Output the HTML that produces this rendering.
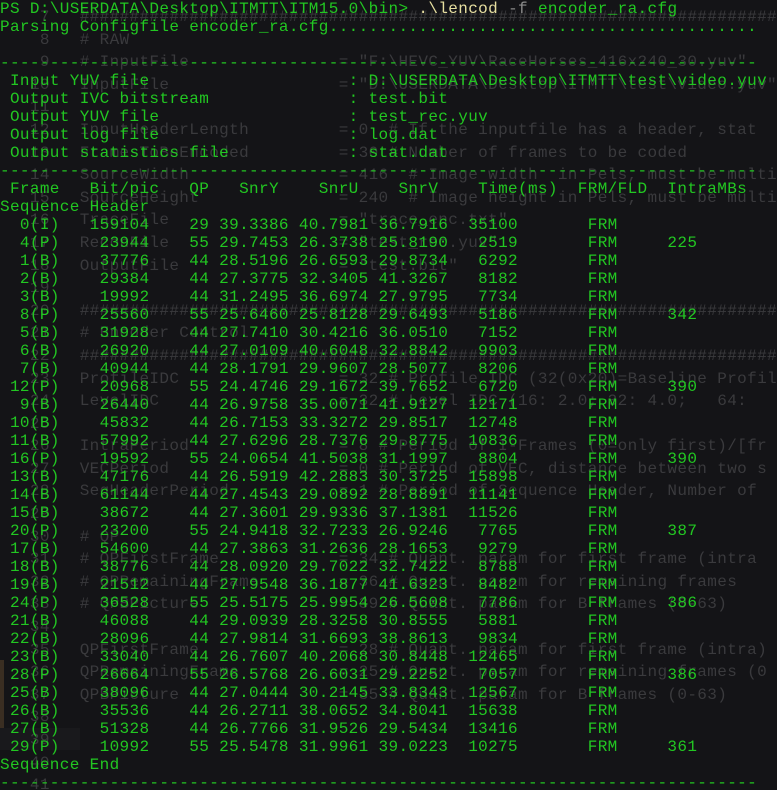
<!DOCTYPE html>
<html><head><meta charset="utf-8">
<style>
html,body{margin:0;padding:0;background:#141417;}
body{width:777px;height:790px;overflow:hidden;position:relative;}
pre{margin:0;font-family:"Liberation Mono",monospace;font-size:16px;letter-spacing:0.36px;white-space:pre;position:absolute;left:0;width:777px;overflow:hidden;}
#ed{top:6px;line-height:22.6px;color:#3a3a3d;font-size:16px;height:784px;}
#tm{top:0;line-height:18px;color:#22c722;height:790px;}
.y{color:#e6dfa0}.g{color:#8a8a8a}
#bar{position:absolute;left:0;top:660px;width:4px;height:70px;background:#3a2e22;}
#blk{position:absolute;left:0;top:728px;width:80px;height:22px;background:#19191c;}
</style></head><body>
<div id="bar"></div><div id="blk"></div>
<pre id="ed">    7   ######################################################################
    8   # RAW
    9   # InputFile               = "F:\HEVC_YUV\RaceHorses_416x240_30.yuv"
   10   InputFile                 = "D:\USERDATA\Desktop\ITMTT\test\video.yuv"
   11
   12   InputHeaderLength         = 0  # If the inputfile has a header, stat
   13   FramesToBeEncoded         = 30 # Number of frames to be coded
   14   SourceWidth               = 416  # Image width  in Pels, must be multi
   15   SourceHeight              = 240  # Image height in Pels, must be multi
   16   TraceFile                 = "trace_enc.txt"
   17   ReconFile                 = "test_rec.yuv"
   18   OutputFile                = "test.bit"
   19
   20   ######################################################################
   21   # Encoder Control
   22   ######################################################################
   23   ProfileIDC                = 32 # Profile IDC (32(0x20)=Baseline Profil
   24   LevelIDC                  = 32 # Level IDC (16: 2.0; 32: 4.0;   64:
   25
   26   IntraPeriod               = 8 # Period of I-Frames (0=only first)/[fr
   27   VECPeriod                 = 0 # Period of VEC, distance between two s
   28   SeqHeaderPeriod           = 1 # Period of Sequence Header, Number of
   29
   30   # QP
   31   # QPFirstFrame            = 34 # Quant. param for first frame (intra
   32   # QPRemainingFrame        = 36 # Quant. param for remaining frames
   33   # QPBPicture              = 39 # Quant. param for B frames (0-63)
   34
   35   QPFirstFrame              = 28 # Quant. param for first frame (intra)
   36   QPRemainingFrame          = 25 # Quant. param for remaining frames (0
   37   QPBPicture                = 35 # Quant. param for B frames (0-63)
   38
   39
   40
   41</pre>
<pre id="tm">PS D:\USERDATA\Desktop\ITMTT\ITM15.0\bin&gt; <span class="y">.\lencod</span> <span class="g">-f</span> encoder_ra.cfg
Parsing Configfile encoder_ra.cfg...........................................

----------------------------------------------------------------------------
 Input YUV file                    : D:\USERDATA\Desktop\ITMTT\test\video.yuv
 Output IVC bitstream              : test.bit
 Output YUV file                   : test_rec.yuv
 Output log file                   : log.dat
 Output statistics file            : stat.dat
----------------------------------------------------------------------------
 Frame   Bit/pic   QP   SnrY    SnrU    SnrV    Time(ms)  FRM/FLD  IntraMBs
Sequence Header
  0(I)   159104    29 39.3386 40.7981 36.7916  35100       FRM
  4(P)    23944    55 29.7453 26.3738 25.8190   2519       FRM     225
  1(B)    37776    44 28.5196 26.6593 29.8734   6292       FRM
  2(B)    29384    44 27.3775 32.3405 41.3267   8182       FRM
  3(B)    19992    44 31.2495 36.6974 27.9795   7734       FRM
  8(P)    25560    55 25.6460 25.8128 29.6493   5186       FRM     342
  5(B)    31928    44 27.7410 30.4216 36.0510   7152       FRM
  6(B)    26920    44 27.0109 40.6048 32.8842   9903       FRM
  7(B)    40944    44 28.1791 29.9607 28.5077   8206       FRM
 12(P)    20968    55 24.4746 29.1672 39.7652   6720       FRM     390
  9(B)    26440    44 26.9758 35.0071 41.9127  12171       FRM
 10(B)    45832    44 26.7153 33.3272 29.8517  12748       FRM
 11(B)    57992    44 27.6296 28.7376 29.8775  10836       FRM
 16(P)    19592    55 24.0654 41.5038 31.1997   8804       FRM     390
 13(B)    47176    44 26.5919 42.2883 30.3725  15898       FRM
 14(B)    61144    44 27.4543 29.0892 28.8891  11141       FRM
 15(B)    38672    44 27.3601 29.9336 37.1381  11526       FRM
 20(P)    23200    55 24.9418 32.7233 26.9246   7765       FRM     387
 17(B)    54600    44 27.3863 31.2636 28.1653   9279       FRM
 18(B)    38776    44 28.0920 29.7022 32.7422   8788       FRM
 19(B)    21512    44 27.9548 36.1877 41.6323   8482       FRM
 24(P)    36528    55 25.5175 25.9954 26.5608   7786       FRM     386
 21(B)    46088    44 29.0939 28.3258 30.8555   5881       FRM
 22(B)    28096    44 27.9814 31.6693 38.8613   9834       FRM
 23(B)    33040    44 26.7607 40.2068 30.8448  12465       FRM
 28(P)    26664    55 26.5768 26.6031 29.2252   7057       FRM     386
 25(B)    38096    44 27.0444 30.2145 33.8343  12567       FRM
 26(B)    35536    44 26.2711 38.0652 34.8041  15638       FRM
 27(B)    51328    44 26.7766 31.9526 29.5434  13416       FRM
 29(P)    10992    55 25.5478 31.9961 39.0223  10275       FRM     361
Sequence End
----------------------------------------------------------------------------</pre>
</body></html>
